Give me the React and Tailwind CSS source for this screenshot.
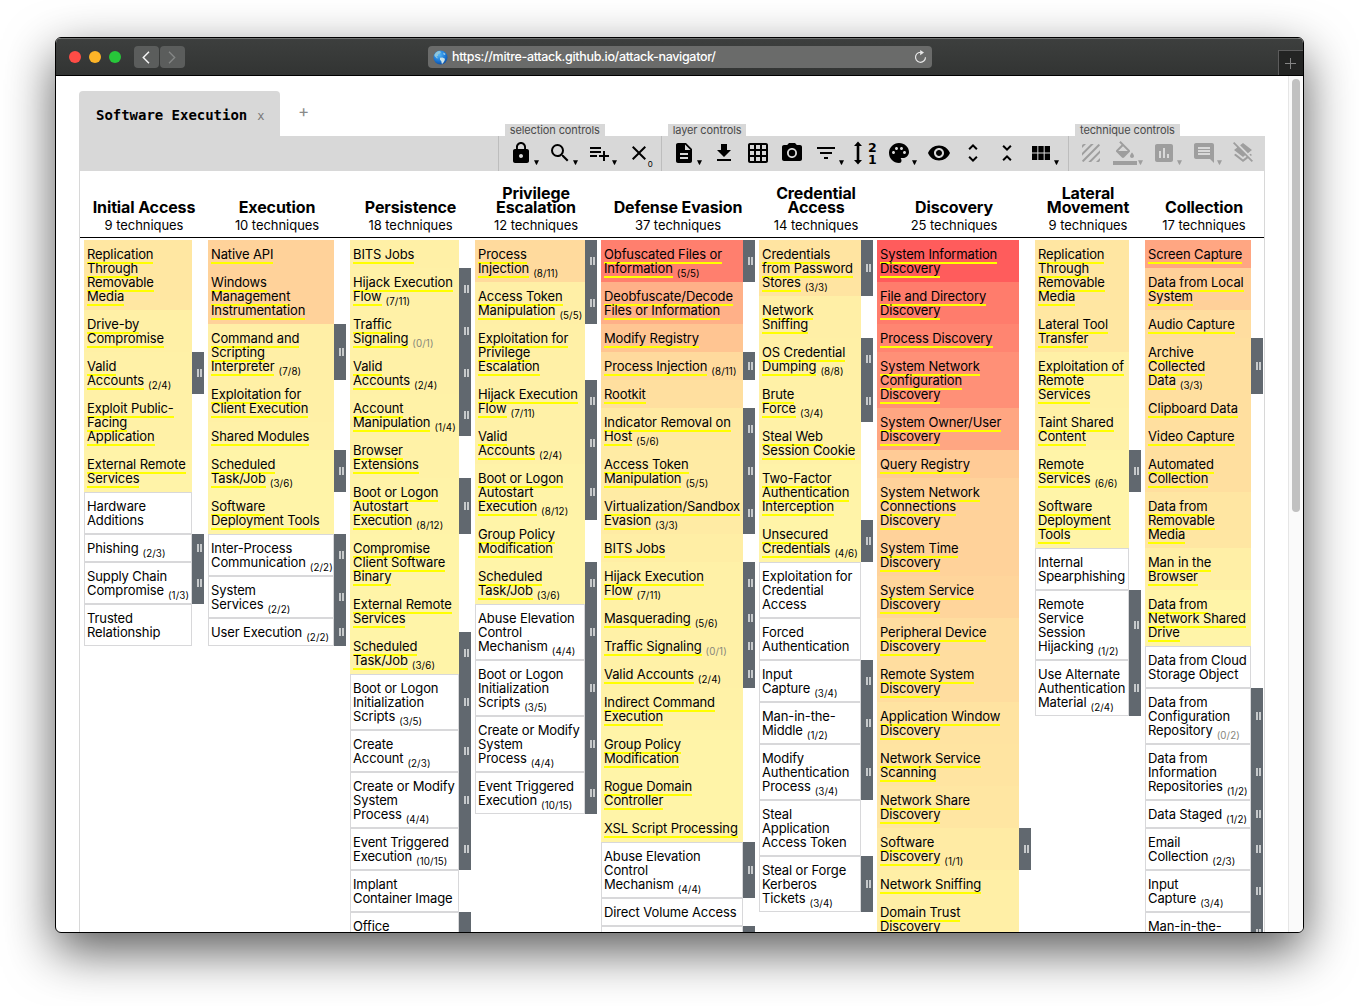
import React from "react";
import {
  MdLock, MdSearch, MdPlaylistAdd, MdClose, MdDescription, MdGetApp, MdGridOn, MdPhotoCamera,
  MdFilterList, MdPalette, MdVisibility, MdUnfoldMore, MdUnfoldLess, MdViewModule, MdTexture,
  MdInsertChart, MdInsertComment, MdLayersClear,
} from "react-icons/md";

// Technique rows: [background or null, text lines split by "|", sub-technique count]
const columns = [
  { w: "w-[108px]", title: ["Initial Access"], count: 9, rows: [
    ["#ffe7a2", "Replication|Through|Removable|Media"],
    ["#fff0a6", "Drive-by|Compromise"],
    ["#fff1a7", "Valid|Accounts", "2/4"],
    ["#fff1a7", "Exploit Public-|Facing|Application"],
    ["#fff3a8", "External Remote|Services"],
    [null, "Hardware|Additions"],
    [null, "Phishing", "2/3"],
    [null, "Supply Chain|Compromise", "1/3"],
    [null, "Trusted|Relationship"],
  ] },
  { w: "w-[126px]", title: ["Execution"], count: 10, rows: [
    ["#ffd29a", "Native API"],
    ["#ffd29a", "Windows|Management|Instrumentation"],
    ["#ffefa6", "Command and|Scripting|Interpreter", "7/8"],
    ["#fff0a6", "Exploitation for|Client Execution"],
    ["#fff1a7", "Shared Modules"],
    ["#fff4a8", "Scheduled|Task/Job", "3/6"],
    ["#fff4a8", "Software|Deployment Tools"],
    [null, "Inter-Process|Communication", "2/2"],
    [null, "System|Services", "2/2"],
    [null, "User Execution", "2/2"],
  ] },
  { w: "w-[109px]", title: ["Persistence"], count: 18, rows: [
    ["#fff0a6", "BITS Jobs"],
    ["#fff1a7", "Hijack Execution|Flow", "7/11"],
    ["#fff1a7", "Traffic|Signaling", "0/1"],
    ["#fff1a7", "Valid|Accounts", "2/4"],
    ["#fff2a7", "Account|Manipulation", "1/4"],
    ["#fff2a7", "Browser|Extensions"],
    ["#fff3a8", "Boot or Logon|Autostart|Execution", "8/12"],
    ["#fff4a8", "Compromise|Client Software|Binary"],
    ["#fff4a8", "External Remote|Services"],
    ["#fff4a8", "Scheduled|Task/Job", "3/6"],
    [null, "Boot or Logon|Initialization|Scripts", "3/5"],
    [null, "Create|Account", "2/3"],
    [null, "Create or Modify|System|Process", "4/4"],
    [null, "Event Triggered|Execution", "10/15"],
    [null, "Implant|Container Image"],
    [null, "Office||", " "],
  ] },
  { w: "w-[110px]", title: ["Privilege", "Escalation"], count: 12, rows: [
    ["#ffda9d", "Process|Injection", "8/11"],
    ["#ffefa6", "Access Token|Manipulation", "5/5"],
    ["#fff0a6", "Exploitation for|Privilege|Escalation"],
    ["#fff1a7", "Hijack Execution|Flow", "7/11"],
    ["#fff1a7", "Valid|Accounts", "2/4"],
    ["#fff3a8", "Boot or Logon|Autostart|Execution", "8/12"],
    ["#fff4a8", "Group Policy|Modification"],
    ["#fff4a8", "Scheduled|Task/Job", "3/6"],
    [null, "Abuse Elevation|Control|Mechanism", "4/4"],
    [null, "Boot or Logon|Initialization|Scripts", "3/5"],
    [null, "Create or Modify|System|Process", "4/4"],
    [null, "Event Triggered|Execution", "10/15"],
  ] },
  { w: "w-[142px]", title: ["Defense Evasion"], count: 37, rows: [
    ["#ff7f6e", "Obfuscated Files or|Information", "5/5"],
    ["#ffb088", "Deobfuscate/Decode|Files or Information"],
    ["#ffc592", "Modify Registry"],
    ["#ffda9d", "Process Injection", "8/11"],
    ["#ffdf9f", "Rootkit"],
    ["#ffeaa3", "Indicator Removal on|Host", "5/6"],
    ["#ffeba4", "Access Token|Manipulation", "5/5"],
    ["#ffeba4", "Virtualization/Sandbox|Evasion", "3/3"],
    ["#ffeea5", "BITS Jobs"],
    ["#fff1a7", "Hijack Execution|Flow", "7/11"],
    ["#fff1a7", "Masquerading", "5/6"],
    ["#fff1a7", "Traffic Signaling", "0/1"],
    ["#fff1a7", "Valid Accounts", "2/4"],
    ["#fff2a7", "Indirect Command|Execution"],
    ["#fff4a8", "Group Policy|Modification"],
    ["#fff4a8", "Rogue Domain|Controller"],
    ["#fff4a8", "XSL Script Processing"],
    [null, "Abuse Elevation|Control|Mechanism", "4/4"],
    [null, "Direct Volume Access"],
    [null, "|", " "],
  ] },
  { w: "w-[102px]", title: ["Credential", "Access"], count: 14, rows: [
    ["#ffe4a1", "Credentials|from Password|Stores", "3/3"],
    ["#ffefa6", "Network|Sniffing"],
    ["#fff0a6", "OS Credential|Dumping", "8/8"],
    ["#fff1a7", "Brute|Force", "3/4"],
    ["#fff1a7", "Steal Web|Session Cookie"],
    ["#fff3a8", "Two-Factor|Authentication|Interception"],
    ["#fff4a8", "Unsecured|Credentials", "4/6"],
    [null, "Exploitation for|Credential|Access"],
    [null, "Forced|Authentication"],
    [null, "Input|Capture", "3/4"],
    [null, "Man-in-the-|Middle", "1/2"],
    [null, "Modify|Authentication|Process", "3/4"],
    [null, "Steal|Application|Access Token"],
    [null, "Steal or Forge|Kerberos|Tickets", "3/4"],
  ] },
  { w: "w-[142px]", title: ["Discovery"], count: 25, rows: [
    ["#ff5c5c", "System Information|Discovery"],
    ["#ff7c6c", "File and Directory|Discovery"],
    ["#ff8571", "Process Discovery"],
    ["#ff9077", "System Network|Configuration|Discovery"],
    ["#ffa682", "System Owner/User|Discovery"],
    ["#ffcb96", "Query Registry"],
    ["#ffd29a", "System Network|Connections|Discovery"],
    ["#ffd29a", "System Time|Discovery"],
    ["#ffd59b", "System Service|Discovery"],
    ["#ffdd9f", "Peripheral Device|Discovery"],
    ["#ffdd9f", "Remote System|Discovery"],
    ["#ffe3a1", "Application Window|Discovery"],
    ["#ffe4a1", "Network Service|Scanning"],
    ["#ffe6a2", "Network Share|Discovery"],
    ["#ffeba4", "Software|Discovery", "1/1"],
    ["#ffefa6", "Network Sniffing"],
    ["#ffefa6", "Domain Trust|Discovery"],
  ] },
  { w: "w-[94px]", title: ["Lateral", "Movement"], count: 9, rows: [
    ["#ffe6a2", "Replication|Through|Removable|Media"],
    ["#ffe7a2", "Lateral Tool|Transfer"],
    ["#fff0a6", "Exploitation of|Remote|Services"],
    ["#fff1a7", "Taint Shared|Content"],
    ["#fff4a8", "Remote|Services", "6/6"],
    ["#fff4a8", "Software|Deployment|Tools"],
    [null, "Internal|Spearphishing"],
    [null, "Remote|Service|Session|Hijacking", "1/2"],
    [null, "Use Alternate|Authentication|Material", "2/4"],
  ] },
  { w: "w-[106px]", title: ["Collection"], count: 17, rows: [
    ["#ffa682", "Screen Capture"],
    ["#ffd099", "Data from Local|System"],
    ["#ffdd9f", "Audio Capture"],
    ["#ffdf9f", "Archive|Collected|Data", "3/3"],
    ["#ffdf9f", "Clipboard Data"],
    ["#ffdf9f", "Video Capture"],
    ["#ffdf9f", "Automated|Collection"],
    ["#ffe6a2", "Data from|Removable|Media"],
    ["#ffefa6", "Man in the|Browser"],
    ["#fff4a8", "Data from|Network Shared|Drive"],
    [null, "Data from Cloud|Storage Object"],
    [null, "Data from|Configuration|Repository", "0/2"],
    [null, "Data from|Information|Repositories", "1/2"],
    [null, "Data Staged", "1/2"],
    [null, "Email|Collection", "2/3"],
    [null, "Input|Capture", "3/4"],
    [null, "Man-in-the-|", " "],
  ] },
];

function Technique({ row, width }) {
  const [bg, text, sub] = row;
  const lines = text.split("|");
  return (
    <div className="flex">
      <div
        className={`${width} shrink-0 border py-[6px] pl-[2px] ${bg ? "border-transparent" : "border-[#d8d8da]"}`}
        style={bg ? { backgroundColor: bg } : undefined}
      >
        {lines.map((line, i) => (
          <div key={i} className="h-[14px] whitespace-nowrap text-[13px] leading-[14px]">
            <span className={`tracking-[-0.12px] ${bg ? "border-b-2 border-[#ffff00]" : ""}`}>{line}</span>
            {sub && sub !== " " && i === lines.length - 1 && (
              <span className={`relative top-[4px] ml-[4px] text-[9.75px] leading-none tracking-[0.1px] ${sub[0] === "0" ? "text-[#85857a]" : ""}`}>
                ({sub})
              </span>
            )}
          </div>
        ))}
      </div>
      {sub && (
        <div className="flex w-3 shrink-0 items-center justify-center gap-px bg-[#61686f] pl-[2px]">
          <i className="h-2 w-[2px] bg-[#c6c9cb]" />
          <i className="h-2 w-[2px] bg-[#c6c9cb]" />
        </div>
      )}
    </div>
  );
}

function Tool({ icon: Icon, menu, wide, dim, children }) {
  const width = wide ? "w-[40.33px]" : menu ? "w-[39.33px]" : "w-[34px]";
  return (
    <div className={`flex h-[34px] shrink-0 items-center ${width} ${dim ? "text-[#9e9e9e]" : "text-black"}`}>
      <div className="flex w-[34px] shrink-0 justify-center">{Icon ? <Icon size={24} /> : children}</div>
      {menu && (
        <svg className="-ml-[4px] mt-[19px] shrink-0" width="5" height="5" viewBox="0 0 5 5">
          <path d="M0 .3h5L2.800 4.800h-.6z" fill="currentColor" />
        </svg>
      )}
    </div>
  );
}

function Group({ label, children }) {
  return (
    <div className="relative flex h-full border-l border-[#bdbdbd] px-[5px]">
      <div className="absolute left-[6px] top-[-12px] h-3 whitespace-nowrap bg-[#d8d8d8] px-[5px] text-[11px] leading-[13px] tracking-[-0.11px] text-[#4a4a4a]">
        {label}
      </div>
      {children}
    </div>
  );
}

function SortIcon() {
  return (
    <svg width="24" height="26" viewBox="0 0 24 26" fill="currentColor" className="overflow-visible">
      <path d="M5 1.500 9 6H6.300v14H9l-4 4.500L1 20h2.700V6H1z" />
      <text x="15" y="11.500" fontSize="12.500" fontWeight="700" fontFamily="DejaVu Sans">2</text>
      <text x="15" y="23.500" fontSize="12.500" fontWeight="700" fontFamily="DejaVu Sans">1</text>
    </svg>
  );
}

function FillIcon() {
  return (
    <svg width="24" height="24" viewBox="0 0 24 24" fill="currentColor" className="overflow-visible">
      <path d="M16.560 8.940 7.620 0 6.210 1.410l2.380 2.380-5.150 5.150c-.59.59-.59 1.540 0 2.120l5.500 5.500c.29.29.68.44 1.060.44s.77-.15 1.060-.44l5.500-5.500c.59-.58.59-1.530 0-2.120zM5.210 10 10 5.210 14.790 10H5.210zM19 11.500s-2 2.170-2 3.500c0 1.100.9 2 2 2s2-.9 2-2c0-1.330-2-3.500-2-3.500zM0 20h24v4H0z" />
    </svg>
  );
}

function Globe() {
  return (
    <svg width="15" height="15" viewBox="0 0 15 15">
      <defs>
        <radialGradient id="sea" cx=".4" cy=".3" r=".75">
          <stop offset="0" stopColor="#55b8f7" />
          <stop offset=".6" stopColor="#1b78d6" />
          <stop offset="1" stopColor="#0d4a9c" />
        </radialGradient>
      </defs>
      <circle cx="7.500" cy="7.500" r="7" fill="url(#sea)" />
      <path d="M1.500 4.500C2.500 2.500 4.500 1.200 6.500 1l1.500 1-1 1.500-1.800.8L5 6 3.500 6.500 5 8 4 8.500 1.500 6z" fill="#8fc6dc" />
      <path d="m7 7.800 2.500-.3 2.500 1.300-.5 2-1.700 2.700-1 .3-.5-2.500L7 9.800z" fill="#c9e2e8" />
      <path d="m10.500 2.500 2 1.500-.8 1-1.400-.8z" fill="#9fd0e8" />
    </svg>
  );
}

export default function App() {
  return (
    <div className="h-[1006px] w-[1359px] overflow-hidden bg-white pl-[55px] pt-[37px] font-['Inter',sans-serif] text-black">
      <div className="flex h-[896px] w-[1249px] flex-col overflow-hidden rounded-[6px] border border-black bg-white shadow-[0_18px_50px_rgba(0,0,0,0.65)]">
        <div className="flex h-[38px] shrink-0 items-center border-b border-t border-b-black border-t-[#6f7170] bg-linear-to-b from-[#3d3f3e] to-[#323433] pl-[13px]">
          <div className="flex gap-2">
            <i className="size-3 rounded-full bg-[#ff4c46]" />
            <i className="size-3 rounded-full bg-[#fdb427]" />
            <i className="size-3 rounded-full bg-[#27c73a]" />
          </div>
          <div className="ml-[13px] flex gap-px">
            <div className="flex h-[22px] w-[25px] items-center justify-center rounded-[4px] bg-[#5b5d5c] pr-px">
              <svg width="8" height="13" viewBox="0 0 8 13" fill="none" stroke="#f2f2f2" strokeWidth="1.500"><path d="M7 .8 1.300 6.500 7 12.200" /></svg>
            </div>
            <div className="flex h-[22px] w-[25px] items-center justify-center rounded-[4px] bg-[#5b5d5c] pr-px">
              <svg width="8" height="13" viewBox="0 0 8 13" fill="none" stroke="#858786" strokeWidth="1.300"><path d="M1 .8 6.700 6.500 1 12.200" /></svg>
            </div>
          </div>
          <div className="ml-[243px] flex h-[22px] w-[504px] items-center rounded-[4px] bg-[#6a6b6a] pl-[5px] pr-[5px]">
            <Globe />
            <span className="ml-[4px] mt-px text-[12.500px] font-medium tracking-[-0.32px] text-white">https://mitre-attack.github.io/attack-navigator/</span>
            <svg className="ml-auto" width="13" height="14" viewBox="0 0 13 14" fill="none" stroke="#e8e8e8" strokeWidth="1.200">
              <path d="M8.500 2.700A5 5 0 1 0 11.500 7.300" />
              <path d="M6.200 0v5.200L10 2.600z" fill="#e8e8e8" stroke="none" />
            </svg>
          </div>
          <div className="ml-auto flex h-[25px] w-[25px] items-center justify-center self-end border-l border-t border-[#5c5c5c] bg-[#232423] pr-px">
            <svg width="11" height="11" viewBox="0 0 11 11" stroke="#858585"><path d="M5.500 0v11M0 5.500h11" /></svg>
          </div>
        </div>

        <div className="flex min-h-0 flex-1">
          <div className="w-[1232px] shrink-0 overflow-hidden pl-[23px] pt-[15px]">
            <div className="flex h-[45px]">
              <div className="flex w-[201px] items-center rounded-t-[4px] bg-[#d8d8d8] pl-[17px] pt-[3px]">
                <span className="whitespace-nowrap font-['DejaVu_Sans_Mono',monospace] text-[14px] font-bold tracking-[-0.03px]">Software Execution</span>
                <span className="ml-[10px] mt-[2px] font-['DejaVu_Sans_Mono',monospace] text-[12px] text-[#777]">x</span>
              </div>
              <span className="ml-[18px] mt-[8px] text-[17px] text-[#8a8a8a]">+</span>
            </div>
            <div className="flex h-[35px] w-[1186px] justify-end bg-[#d8d8d8]">
              <Group label="selection controls">
                <Tool icon={MdLock} menu />
                <Tool icon={MdSearch} menu />
                <Tool icon={MdPlaylistAdd} menu />
                <Tool>
                  <span className="relative">
                    <MdClose size={24} />
                    <span className="absolute left-[21px] top-[18px] text-[8px] leading-[10px]">0</span>
                  </span>
                </Tool>
              </Group>
              <Group label="layer controls">
                <Tool icon={MdDescription} menu wide />
                <Tool icon={MdGetApp} />
                <Tool icon={MdGridOn} />
                <Tool icon={MdPhotoCamera} />
                <Tool icon={MdFilterList} menu />
                <Tool><SortIcon /></Tool>
                <Tool icon={MdPalette} menu />
                <Tool icon={MdVisibility} />
                <Tool icon={MdUnfoldMore} />
                <Tool icon={MdUnfoldLess} />
                <Tool icon={MdViewModule} menu />
              </Group>
              <Group label="technique controls">
                <Tool icon={MdTexture} dim />
                <Tool menu dim><FillIcon /></Tool>
                <Tool icon={MdInsertChart} menu dim />
                <Tool icon={MdInsertComment} menu dim />
                <Tool icon={MdLayersClear} dim />
              </Group>
            </div>
            <div className="h-[800px] w-[1186px] border-x border-[#d8d8d8]">
              <div className="flex h-[67px] items-end gap-1 border-b border-black pb-[3px] pl-1">
                {columns.map((c) => (
                  <div key={c.title[0]} className="pr-3">
                    <div className={c.w}>
                      <div className="-mr-3 text-center">
                        {c.title.map((t) => (
                          <div key={t} className="text-[16px] font-bold leading-[14px] tracking-[-0.12px]">{t}</div>
                        ))}
                        <div className="mt-[2px] text-[13px] leading-[18px] tracking-[-0.05px]">{c.count} techniques</div>
                      </div>
                    </div>
                  </div>
                ))}
              </div>
              <div className="flex gap-1 pl-1 pt-[2px]">
                {columns.map((c) => (
                  <div key={c.title[0]} className="pr-3">
                    <div className={c.w}>
                      {c.rows.map((r, i) => <Technique key={i} row={r} width={c.w} />)}
                    </div>
                  </div>
                ))}
              </div>
            </div>
          </div>
          <div className="flex-1 border-l border-[#e6e6e6] bg-[#fafafa] pl-[3px] pt-[3px]">
            <div className="h-[433px] w-2 rounded-full bg-[#c1c1c1]" />
          </div>
        </div>
      </div>
    </div>
  );
}
